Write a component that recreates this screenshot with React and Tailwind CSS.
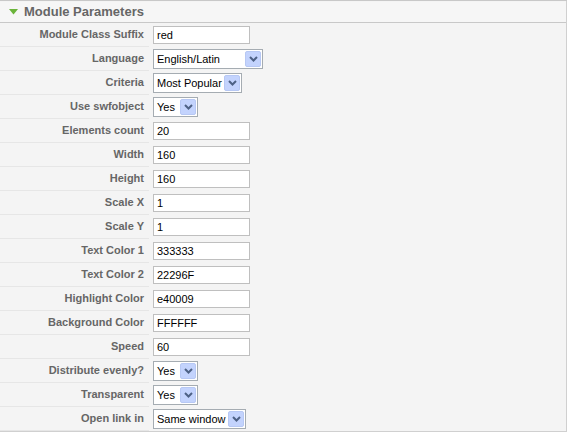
import React from 'react';

// Joomla-style module parameters panel
const rows = [
    { label: 'Module Class Suffix', type: 'text', value: 'red' },
    { label: 'Language', type: 'select', value: 'English/Latin', w: 'w-[110px]' },
    { label: 'Criteria', type: 'select', value: 'Most Popular', w: 'w-[89px]' },
    { label: 'Use swfobject', type: 'select', value: 'Yes', w: 'w-[45px]' },
    { label: 'Elements count', type: 'text', value: '20' },
    { label: 'Width', type: 'text', value: '160' },
    { label: 'Height', type: 'text', value: '160' },
    { label: 'Scale X', type: 'text', value: '1' },
    { label: 'Scale Y', type: 'text', value: '1' },
    { label: 'Text Color 1', type: 'text', value: '333333' },
    { label: 'Text Color 2', type: 'text', value: '22296F' },
    { label: 'Highlight Color', type: 'text', value: 'e40009' },
    { label: 'Background Color', type: 'text', value: 'FFFFFF' },
    { label: 'Speed', type: 'text', value: '60' },
    { label: 'Distribute evenly?', type: 'select', value: 'Yes', w: 'w-[45px]' },
    { label: 'Transparent', type: 'select', value: 'Yes', w: 'w-[45px]' },
    { label: 'Open link in', type: 'select', value: 'Same window', w: 'w-[93px]' },
];

const Arrow = () => (
    <div className="w-[16px] h-[16px] shrink-0 bg-[#c3d3fd] border border-[#b7c8f4] rounded-[2px] flex items-center justify-center">
        <svg width="9" height="6" viewBox="0 0 9 6">
            <path d="M1 1 L4.5 4.5 L8 1" fill="none" stroke="#4d6185" strokeWidth="2" />
        </svg>
    </div>
);

const Field = ({ row }) => {
    if (row.type === 'text') {
        return (
            <div className="w-[97px] h-[18px] bg-white border border-[#bfbfbf] flex items-center pl-[3px] text-[11px] text-black leading-none">
                {row.value}
            </div>
        );
    }
    return (
        <div className={`${row.w} h-[20px] bg-white border border-[#a5acb2] flex items-center justify-between pl-[3px] pr-px text-[11px] text-black leading-none whitespace-nowrap`}>
            <span>{row.value}</span>
            <Arrow />
        </div>
    );
};

export default function App() {
    return (
        <div
            className="w-[567px] h-[432px] bg-[#f4f4f4] border-t border-[#c8c8c8]"
            style={{ fontFamily: '"Liberation Sans", Arial, sans-serif' }}
        >
            <div className="h-[431px] border-r border-b border-[#d0d0d0] flex flex-col">
                {/* Header */}
                <div className="h-[21px] mt-px flex items-center pl-[9px] border-b border-[#c8c8c8] bg-[#f6f6f6]">
                    <svg width="9" height="6" viewBox="0 0 9 6" className="mr-[6px]">
                        <path d="M0 0 H9 L4.5 5.5 Z" fill="#6bb43a" />
                    </svg>
                    <span className="text-[13px] font-bold text-[#666666]">Module Parameters</span>
                </div>

                {/* Rows */}
                <div className="flex flex-col">
                    {rows.map((row) => (
                        <div key={row.label} className="flex h-[24px]">
                            <div className="w-[149px] shrink-0 border-b border-[#e6e6e6] flex items-center justify-end pr-[5px] text-[11px] font-bold text-[#666666] leading-none whitespace-nowrap">
                                {row.label}
                            </div>
                            <div className="flex items-center pl-[4px]">
                                <Field row={row} />
                            </div>
                        </div>
                    ))}
                </div>
            </div>
        </div>
    );
}
